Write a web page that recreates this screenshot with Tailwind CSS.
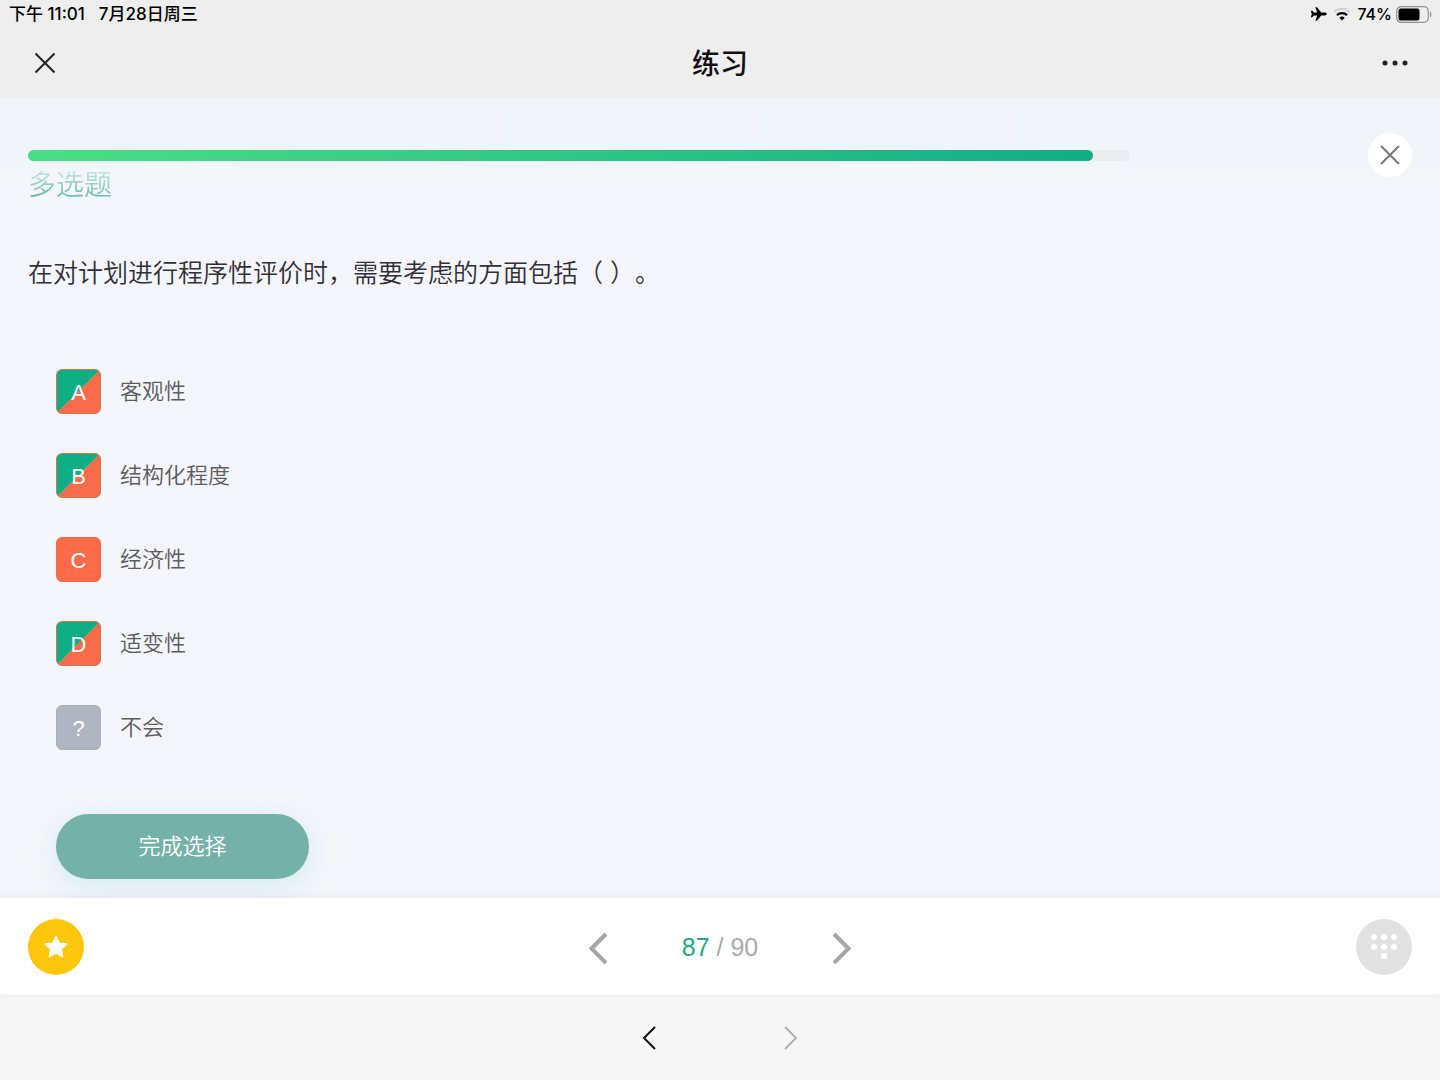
<!DOCTYPE html>
<html lang="zh-CN">
	<head>
		<meta charset="UTF-8" />
		<meta name="viewport" content="width=device-width, initial-scale=1.0" />
		<title>练习</title>
		<script src="https://cdn.jsdelivr.net/npm/@tailwindcss/browser@4"></script>
	</head>
	<body class="bg-[#f5f6fb] font-['Liberation_Sans','Noto_Sans_CJK_SC',sans-serif]">
		<div class="min-h-screen flex flex-col">
			<header class="bg-[#eeeeee] text-black">
				<!-- Status bar -->
				<div class="h-7 pl-[9px] pr-2 flex items-center justify-between leading-7 font-medium font-['Inter','Noto_Sans_CJK_SC',sans-serif]">
					<div class="flex gap-[14px] text-[17px]">
						<span>下午 11:01</span>
						<span>7月28日周三</span>
					</div>
					<div class="flex items-center gap-[6px] text-[16px]">
						<svg class="w-[17px] h-4" viewBox="0 0 17 16" fill="currentColor">
							<path d="M16.8 8c0-.8-1-1.4-2.3-1.4h-3.3L7 1.2H5.300l1.9 5.400H4L2.200 4.800H.8L1.800 8l-1 3.200h1.400L4 9.400h3.200l-1.900 5.400H7l4.200-5.400h3.300c1.300 0 2.300-.6 2.300-1.400z" />
						</svg>
						<svg class="w-[18px] h-[14px]" viewBox="0 0 18 14" fill="none">
							<path d="M1.3 5a11 11 0 0 1 15.4 0" stroke="#d2d2d2" stroke-width="2.2" />
							<path d="M4 8.1a7.2 7.2 0 0 1 10 0" stroke="#000" stroke-width="2.3" />
							<path d="M9 13.5 6.3 10.8a3.9 3.9 0 0 1 5.4 0z" fill="#000" />
						</svg>
						<div class="flex items-center gap-1">
							<span>74%</span>
							<svg class="w-9 h-[17px]" viewBox="0 0 36 17" fill="none">
								<rect x="0.7" y="0.7" width="31.6" height="15.6" rx="4.5" stroke="#8f8f8f" stroke-width="1.2" />
								<rect x="2.5" y="2.5" width="21" height="12" rx="2.5" fill="#000" />
								<path d="M34 5.5c1.8.8 1.8 5.2 0 6z" fill="#8f8f8f" />
							</svg>
						</div>
					</div>
				</div>
				<!-- Title bar -->
				<div class="h-[70px] px-8 grid grid-cols-3 items-center">
					<button type="button" aria-label="关闭" class="justify-self-start">
						<svg class="w-[26px] h-[26px]" viewBox="0 0 26 26" fill="none" stroke="#222" stroke-width="2">
							<path d="M3.5 3.5l19 19M22.5 3.5l-19 19" />
						</svg>
					</button>
					<h1 class="pt-1 text-[28px] leading-10 font-medium text-center text-[#111]">练习</h1>
					<button type="button" aria-label="更多" class="justify-self-end">
						<svg class="w-[26px] h-[26px]" viewBox="0 0 26 26" fill="#222">
							<circle cx="3" cy="13" r="2.5" />
							<circle cx="13" cy="13" r="2.5" />
							<circle cx="23" cy="13" r="2.5" />
						</svg>
					</button>
				</div>
			</header>

			<main class="flex-1">
				<!-- Progress -->
				<div class="h-[84px] px-7 pt-[30px] flex items-center justify-between bg-linear-to-b from-[#f0f5f9] from-70% to-[#f5f6fb]">
					<div class="w-[1102px] max-w-4/5 h-[11px] rounded-full bg-[#e9edf0]" role="progressbar" aria-label="进度" aria-valuenow="87" aria-valuemin="0" aria-valuemax="90">
						<div class="h-full rounded-full bg-linear-to-r from-[#4ade87] to-[#0fae84]" style="width: 96.67%"></div>
					</div>
					<button type="button" aria-label="退出练习" class="w-11 h-11 rounded-full bg-white flex items-center justify-center">
						<svg class="w-[22px] h-[22px]" viewBox="0 0 22 22" fill="none" stroke="#777" stroke-width="2">
							<path d="M2 2l18 18M20 2L2 20" />
						</svg>
					</button>
				</div>

				<div class="px-7">
					<p class="w-fit text-[28px] leading-8 -mt-3 text-transparent bg-clip-text bg-linear-to-b from-[#c5e8e3] to-[#56b3a2] font-[350]">多选题</p>
					<h2 class="mt-[53px] text-[25px] leading-9 font-[350] text-[#303036] [text-spacing-trim:space-all]">在对计划进行程序性评价时，需要考虑的方面包括（ ）。</h2>

					<form class="px-7 pt-[78px]">
						<div class="flex flex-col gap-[39px] text-[22px] leading-[45px] font-[350] text-[#5c5c62]">
							<label class="w-fit flex gap-[19px]">
								<input type="checkbox" name="answer" value="A" class="sr-only" checked />
								<span class="w-[45px] h-[45px] rounded-md border border-[#c77c50] bg-linear-135 from-[#10ae84] from-49% to-[#fb6b4a] to-51% text-white text-center">A</span>
								<span>客观性</span>
							</label>
							<label class="w-fit flex gap-[19px]">
								<input type="checkbox" name="answer" value="B" class="sr-only" checked />
								<span class="w-[45px] h-[45px] rounded-md border border-[#c77c50] bg-linear-135 from-[#10ae84] from-49% to-[#fb6b4a] to-51% text-white text-center">B</span>
								<span>结构化程度</span>
							</label>
							<label class="w-fit flex gap-[19px]">
								<input type="checkbox" name="answer" value="C" class="sr-only" checked />
								<span class="w-[45px] h-[45px] rounded-md border border-[#ee6b4c] bg-[#fb6b4a] text-white text-center">C</span>
								<span>经济性</span>
							</label>
							<label class="w-fit flex gap-[19px]">
								<input type="checkbox" name="answer" value="D" class="sr-only" checked />
								<span class="w-[45px] h-[45px] rounded-md border border-[#c77c50] bg-linear-135 from-[#10ae84] from-49% to-[#fb6b4a] to-51% text-white text-center">D</span>
								<span>适变性</span>
							</label>
							<label class="w-fit flex gap-[19px]">
								<input type="checkbox" name="answer" value="unknown" class="sr-only" />
								<span class="w-[45px] h-[45px] rounded-md border border-[#a9aebb] bg-[#b0b5c2] text-white text-center">?</span>
								<span>不会</span>
							</label>
						</div>
						<button type="button" class="mt-16 mb-[19px] w-[253px] h-[65px] rounded-full bg-[#74b1a9] text-[22px] font-[350] text-white shadow-[0_6px_28px_rgba(80,200,190,0.22)]">完成选择</button>
					</form>
				</div>
			</main>

			<!-- Question pager -->
			<div class="relative h-[97px] px-7 bg-white grid grid-cols-3 items-center shadow-[0_-2px_8px_rgba(60,60,90,0.06)]">
				<button type="button" aria-label="收藏" class="w-14 h-14 rounded-full bg-[#fec60d] flex items-center justify-center">
					<svg class="w-6 h-6" viewBox="0 0 24 24" fill="#fff" stroke="#fff" stroke-width="1.5" stroke-linejoin="round">
						<path d="M12 1.5l3.2 6.7 7.3.9-5.4 5 1.4 7.3L12 17.9l-6.5 3.5 1.4-7.3-5.4-5 7.3-.9z" />
					</svg>
				</button>
				<div class="flex items-center justify-center gap-[72px]">
					<button type="button" aria-label="上一题">
						<svg class="w-6 h-9" viewBox="0 0 24 36" fill="none" stroke="#a5a5a5" stroke-width="4">
							<path d="M20 5L5.5 19.5 20 34" />
						</svg>
					</button>
					<p class="text-[25px] leading-8 text-[#aaa] whitespace-nowrap"><span class="text-[#1fa884]">87</span> / 90</p>
					<button type="button" aria-label="下一题">
						<svg class="w-6 h-9" viewBox="0 0 24 36" fill="none" stroke="#a5a5a5" stroke-width="4">
							<path d="M4 5l14.5 14.5L4 34" />
						</svg>
					</button>
				</div>
				<button type="button" aria-label="答题卡" class="justify-self-end w-14 h-14 rounded-full bg-[#e2e2e2] flex items-center justify-center">
					<svg class="w-7 h-7" viewBox="0 0 28 28" fill="#fff">
						<circle cx="4" cy="4" r="3" />
						<circle cx="14" cy="4" r="3" />
						<circle cx="24" cy="4" r="3" />
						<circle cx="4" cy="14" r="3" />
						<circle cx="14" cy="14" r="3" />
						<circle cx="24" cy="14" r="3" />
						<circle cx="14" cy="23" r="3" />
					</svg>
				</button>
			</div>

			<!-- Browser navigation -->
			<nav class="h-[85px] border-t border-[#f0f0f0] bg-[#f6f6f6] flex items-center justify-center gap-[126px]">
				<button type="button" aria-label="后退">
					<svg class="w-4 h-6" viewBox="0 0 16 24" fill="none" stroke="#111" stroke-width="2">
						<path d="M14 1L3 12l11 11" />
					</svg>
				</button>
				<button type="button" aria-label="前进" disabled>
					<svg class="w-4 h-6" viewBox="0 0 16 24" fill="none" stroke="#b0b0b0" stroke-width="2">
						<path d="M2 1l11 11L2 23" />
					</svg>
				</button>
			</nav>
		</div>
	</body>
</html>
